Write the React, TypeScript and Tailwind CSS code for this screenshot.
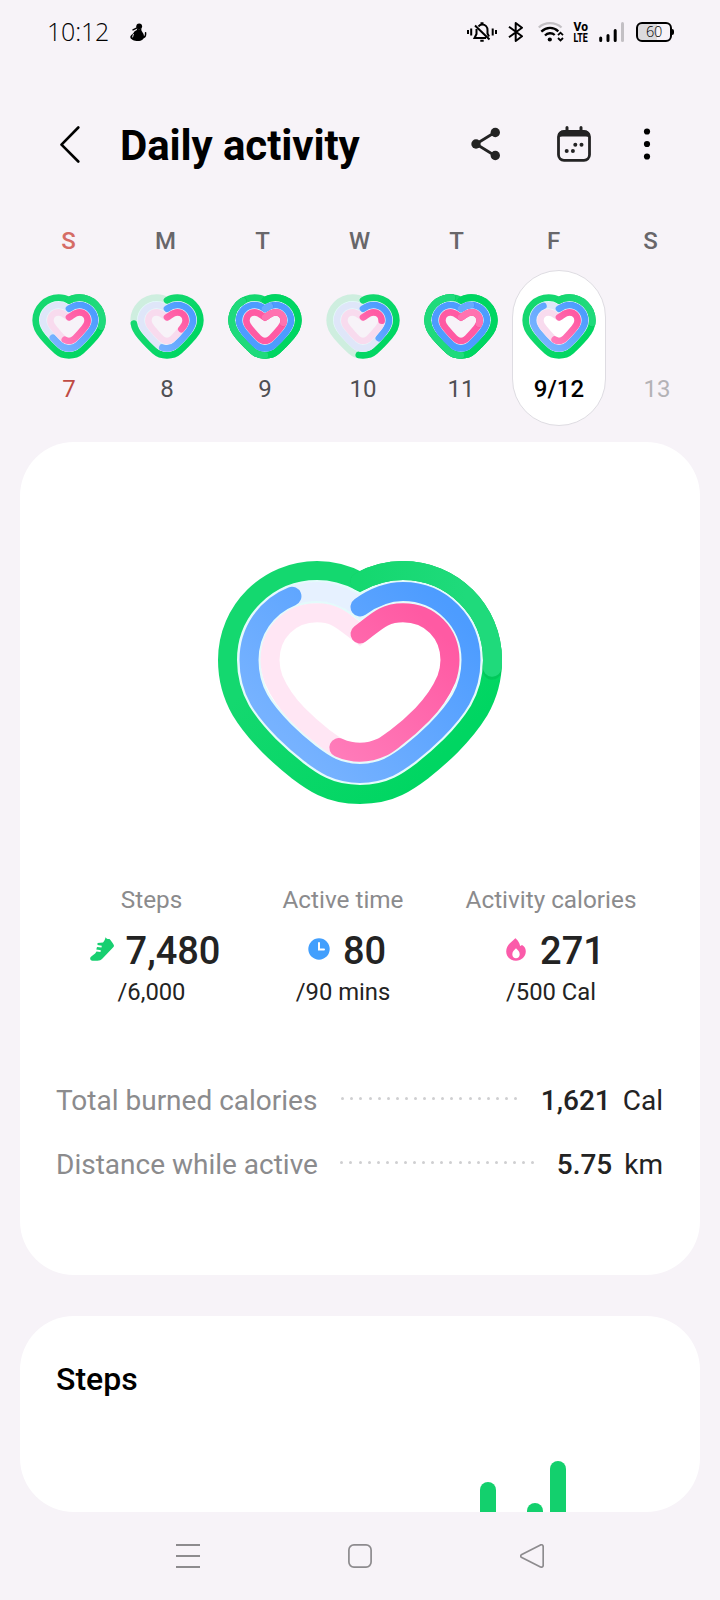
import { useId } from "react";

interface RingPaths {
  viewBox: string;
  stroke: number;
  rings: string[];
}

// Outer, middle and inner ring, each starts at the notch and runs clockwise
const LARGE: RingPaths = {
  viewBox: "18 21 284 243",
  stroke: 19,
  rings: [
    "M160 41.5C174 34 188 30.5 203 30.5C252 30.5 292.5 70 292.5 120C292.5 139 288 155 279.1 170.6C271 184 261.5 195 250.9 205.7C242 214.5 233 222.5 223.1 230.3C215.5 236 207.5 242 198.1 246.4C186 252.3 173 254.4 160 254.4C147 254.4 134 252.3 121.9 246.4C112.5 242 104.5 236 96.9 230.3C87 222.5 78 214.5 69.1 205.7C58.5 195 49 184 40.9 170.6C32 155 27.5 139 27.5 120C27.5 70 68 30.5 117 30.5C132 30.5 146 34 160 41.5Z",
    "M160 67C174 57 187 51.6 203 51.6C241 51.6 271 82 271 120C271 135 268 147 261 159.5C254.5 171 245.5 181 235.6 191C227.5 199 219 206.5 210.3 213.3C203.5 218.5 196.5 223.5 188.5 227.4C179.5 231.5 170 233.4 160 233.4C150 233.4 140.5 231.5 131.5 227.4C123.5 223.5 116.5 218.5 109.7 213.3C101 206.5 92.5 199 84.4 191C74.5 181 65.5 171 59 159.5C52 147 49 135 49 120C49 82 79 51.6 117 51.6C133 51.6 146 57 160 67Z",
    "M160 94C177 81 184 72.7 203 72.7C230 72.7 250 93 250 120C250 126 249 132 246.5 139C241 152 232 164.5 222.3 174.5C214 183 205.5 190.5 196.2 197.5C191.5 201 187.5 204.5 182.4 207C175 210.5 168 212.2 160 212.2C152 212.2 145 210.5 137.6 207C132.5 204.5 128.5 201 123.8 197.5C114.5 190.5 106 183 97.7 174.5C88 164.5 79 152 73.5 139C71 132 70 126 70 120C70 93 90 72.7 117 72.7C136 72.7 143 81 160 94Z",
  ],
};

const SMALL: RingPaths = {
  viewBox: "0 0 222 195",
  stroke: 20,
  rings: [
    "M111 19C121 13 131 11 142 11C180 11 211 42 211 79C211 100 203 113 190 128C177 143 162 159 148 171C138 180 126 184 111 184C96 184 84 180 74 171C60 159 45 143 32 128C19 113 11 100 11 79C11 42 42 11 80 11C91 11 101 13 111 19Z",
    "M111 44C121 37 131 33 142 33C168 33 189 54 189 79C189 95 182 105 172 117C162 129 151 141 140 151C132 159 122 163 111 163C100 163 90 159 82 151C71 141 60 129 50 117C40 105 33 95 33 79C33 54 54 33 80 33C91 33 101 37 111 44Z",
    "M111 70C124 62 130 55 142 55C157 55 167 66 167 80C167 89 162 96 156 103C148 113 139 123 130 132C124 138 118 141 111 141C104 141 98 138 92 132C83 123 74 113 66 103C60 96 55 89 55 80C55 66 65 55 80 55C92 55 98 62 111 70Z",
  ],
};

const COLORS = [
  { from: "#14d86f", to: "#00d662", lap: "#1fda7b", shade: "#00b84f", track: "rgba(20,215,110,0.18)" },
  { from: "#76b2ff", to: "#4d9cff", lap: "#66aaff", shade: "#3d86ea", track: "rgba(75,155,255,0.14)" },
  { from: "#ff7cba", to: "#ff5aa3", lap: "#ff72b0", shade: "#e04489", track: "rgba(255,85,180,0.15)" },
];

function HeartRings({ shape, values, className }: { shape: RingPaths; values: number[]; className: string }) {
  const id = useId();
  return (
    <svg viewBox={shape.viewBox} className={className} fill="none" strokeLinecap="round">
      <defs>
        {COLORS.map((c, i) => (
          <linearGradient key={i} id={`${id}-${i}`} x1="0" y1={i === 0 ? "0" : "0.8"} x2="1" y2={i === 0 ? "0.8" : "0"}>
            <stop offset={i === 0 ? "0.3" : "0.1"} stopColor={c.from} />
            <stop offset="0.9" stopColor={c.to} />
          </linearGradient>
        ))}
        <linearGradient id={`${id}-lap`} x1="0" y1="0" x2="1" y2="0">
          <stop offset="0.5" stopColor={COLORS[0].from} />
          <stop offset="0.9" stopColor={COLORS[0].lap} />
        </linearGradient>
        <clipPath id={`${id}-in`}>
          <path d={shape.rings[0]} />
        </clipPath>
      </defs>
      {shape.rings.slice(0, 2).map((d, i) => (
        <path key={i} d={d} stroke="#e4fbfb" strokeWidth={shape.stroke + 4.6} clipPath={i === 0 ? `url(#${id}-in)` : undefined} />
      ))}
      {shape.rings.map((d, i) => {
        const c = COLORS[i];
        const value = values[i];
        const extra = value - 1;
        const lapColor = i === 0 ? `url(#${id}-lap)` : c.lap;
        return (
          <g key={i} strokeWidth={shape.stroke}>
            {value < 1 && (
              <>
                <path d={d} stroke={shape === LARGE ? "#ffffff" : "#f7f3f8"} />
                <path d={d} stroke={c.track} />
              </>
            )}
            <path
              d={d}
              pathLength={1}
              stroke={value > 1 && i > 0 ? c.to : `url(#${id}-${i})`}
              strokeDasharray={value < 1 ? `${value} 2` : undefined}
            />
            {extra > 0 && (
              <>
                <path d={d} pathLength={1} stroke={c.shade} strokeOpacity={0.45} strokeDasharray={`${extra + 0.004} 2`} />
                <path d={d} pathLength={1} stroke={extra > 0.5 ? c.to : lapColor} strokeDasharray={`${extra} 2`} />
                {extra > 0.5 && (
                  <path
                    d={d}
                    pathLength={1}
                    stroke={c.lap}
                    strokeDasharray={`${extra - 0.5} 2`}
                    strokeDashoffset={-0.5}
                  />
                )}
              </>
            )}
          </g>
        );
      })}
    </svg>
  );
}

const weekdays = ["S", "M", "T", "W", "T", "F", "S"];

const days = [
  { label: "7", values: [1.27, 0.63, 0.54], color: "text-[#bf4b44]" },
  { label: "8", values: [0.745, 0.53, 0.32], color: "text-[#4f4f53]" },
  { label: "9", values: [1.88, 1.035, 1.25], color: "text-[#4f4f53]" },
  { label: "10", values: [0.52, 0.37, 0.23], color: "text-[#4f4f53]" },
  { label: "11", values: [1.95, 1.07, 1.26], color: "text-[#4f4f53]" },
  { label: "9/12", values: [1.25, 0.889, 0.542], color: "text-black", selected: true },
  { label: "13", values: null, color: "text-[#b4b2b6]" },
];

function StatusBar() {
  return (
    <div className="flex h-16 items-center pl-[47px] pr-[46px] text-black">
      <span className="-mt-0.5 w-[83px] font-['Open_Sans'] text-[25px] font-[350] leading-none tracking-[-0.2px]">10:12</span>
      <svg className="h-[18px] w-[17px]" viewBox="0 0 17 18">
        <circle cx="9.2" cy="3.3" r="2.9" />
        <path d="M7 4.800L3 6.800" stroke="#000" strokeWidth="1.500" strokeLinecap="round" />
        <path d="M7 5.500C8 6.500 10 6.500 11.500 5.500C10.500 8.500 14 9.500 14 13.200C14 16 12 18 7.800 18C4.500 18 0.300 16.500 0.300 14C0.300 12 3.500 11 4 9C5 7.500 7.500 7.800 7 5.500Z" />
        <path d="M3.400 11.300L2.600 14" stroke="#f7f3f8" strokeWidth="0.900" strokeLinecap="round" />
        <path d="M12.500 14.800C15.500 14.500 15.800 12 15.600 9.800" fill="none" stroke="#000" strokeWidth="1.500" strokeLinecap="round" />
      </svg>
      <div className="ml-auto flex items-center">
        <svg className="h-5 w-[30px]" viewBox="0 0 30 20" fill="none" stroke="#000" strokeWidth="2">
          <path d="M1 8V12M4.200 6.500V13.500M25.700 6.500V13.500M29 8V12" />
          <path d="M11.500 4.500C12.300 3 13.600 2.400 15 2.400C18.500 2.400 20.500 5 20.500 8V11.500L22 14.500M19 16H7.500L9.500 12V7" />
          <path d="M8 3.500L22.500 17.500" />
          <path d="M13.500 1.200H16.500M13.300 18.800H16.700" />
        </svg>
        <svg className="ml-[11px] h-5 w-[15px]" viewBox="0 0 15 20" fill="none" stroke="#000" strokeWidth="2" strokeLinejoin="round">
          <path d="M1 4.800L14 14.300L7.700 19V1L14 5.700L1 15.200" />
        </svg>
        <svg className="ml-[15px] h-5 w-[26px]" viewBox="0 0 26 20" fill="none">
          <path d="M0.800 5.500C7 -0.300 17 -0.300 23.500 5.500" stroke="#c3c0c4" strokeWidth="2.300" />
          <path d="M3.300 9.700C8.500 4.800 15.500 4.800 20.300 9.300M7 13.500C9.500 10.700 14 10.500 16.700 13" stroke="#000" strokeWidth="2.300" />
          <circle cx="11.800" cy="17.500" r="2.100" fill="#000" />
          <path d="M20 13.200L22.500 10.700L25 13.200M20 16L22.500 18.500L25 16" stroke="#000" strokeWidth="1.800" />
        </svg>
        <div className="ml-[8px] flex w-[17px] flex-col items-center text-[13px] font-extrabold leading-[11px]">
          <span className="scale-x-[0.92]">Vo</span>
          <span className="scale-x-[0.68]">LTE</span>
        </div>
        <svg className="ml-[10px] h-5 w-[26px]" viewBox="0 0 26 20" strokeWidth="3" strokeLinecap="round">
          <path d="M1.700 16V18.500M9 13.500V18.500M16.200 8.500V18.500" stroke="#000" />
          <path d="M23.500 1.500V18.500" stroke="#c3c0c4" />
        </svg>
        <div className="ml-[11px] flex items-center">
          <div className="flex h-5 w-9 items-center justify-center rounded-[6px] border-2 border-black bg-linear-to-r from-[#dcdadd] from-60% to-transparent to-60% font-['Open_Sans'] text-[14.500px] font-light leading-none tracking-[-0.3px]">
            60
          </div>
          <div className="h-1.5 w-0.5 rounded-r-sm bg-black" />
        </div>
      </div>
    </div>
  );
}

function Header() {
  return (
    <header className="flex h-[163px] items-center pl-[60px]">
      <svg className="-mt-0.5 h-[38px] w-5" viewBox="0 0 20 38" fill="none" stroke="#000" strokeWidth="2.600" strokeLinecap="round" strokeLinejoin="round">
        <path d="M18.300 1.500L1.500 18.700L18.300 35.500" />
      </svg>
      <h1 className="ml-10 w-[351px] text-[42px] font-bold leading-none tracking-[-0.1px] text-black">Daily activity</h1>
      <svg className="-mt-1 h-[34px] w-[30px]" viewBox="0 0 30 34" fill="#232323">
        <path d="M24.500 5L5 17L24.500 29" fill="none" stroke="#232323" strokeWidth="2.800" />
        <circle cx="24.300" cy="5.500" r="4.700" />
        <circle cx="5" cy="17" r="4.700" />
        <circle cx="24.300" cy="28.500" r="4.700" />
      </svg>
      <svg className="-mt-1 ml-14 h-9 w-[34px]" viewBox="0 0 34 36" fill="#232323">
        <path d="M10 1.500V6M24 1.500V6" stroke="#232323" strokeWidth="3" strokeLinecap="round" />
        <rect x="1.500" y="5.300" width="31" height="29" rx="5.500" fill="none" stroke="#232323" strokeWidth="2.800" />
        <path d="M1 12V10Q1 4.500 7 4.500H27Q33 4.500 33 10V12Q32 10.500 29 10.500H5Q2 10.500 1 12Z" />
        <circle cx="18.300" cy="18.700" r="2" />
        <circle cx="24.500" cy="18.700" r="2" />
        <circle cx="9.700" cy="25" r="2" />
        <circle cx="15.900" cy="25" r="2" />
      </svg>
      <svg className="-mt-1 ml-[52px] h-8 w-2" viewBox="0 0 8 32">
        <circle cx="4" cy="3.500" r="3.100" />
        <circle cx="4" cy="16" r="3.100" />
        <circle cx="4" cy="28.500" r="3.100" />
      </svg>
    </header>
  );
}

function WeekStrip() {
  return (
    <section>
      <div className="ml-5 grid h-7 w-[679px] grid-cols-7 items-center text-center text-2xl font-medium leading-none text-[#68666a]">
        {weekdays.map((d, i) => (
          <span key={i} className={i === 0 ? "text-[#d56c66]" : undefined}>
            {d}
          </span>
        ))}
      </div>
      <div className="ml-5 mt-[15px] grid h-[156px] w-[686px] grid-cols-7">
        {days.map((day) => (
          <div
            key={day.label}
            className={
              day.selected
                ? "mx-auto flex w-[94px] flex-col items-center rounded-full border border-[#dedce2] bg-white pt-[23px]"
                : "flex flex-col items-center pt-6"
            }
          >
            {day.values ? (
              <HeartRings shape={SMALL} values={day.values} className="h-[65px] w-[74px]" />
            ) : (
              <div className="h-[65px]" />
            )}
            <span className={`mt-4 flex h-7 items-center text-2xl leading-none ${day.color} ${day.selected ? "font-medium" : "font-normal"}`}>
              {day.label}
            </span>
          </div>
        ))}
      </div>
    </section>
  );
}

function ShoeIcon() {
  return (
    <svg className="mr-3 h-6 w-6" viewBox="0 0 24 24" fill="#17cf70">
      <path d="M15.500 0.300C16.500 2 18 2.200 19.500 2C21 3.500 22.500 5.500 23.800 8C24.200 9 23.800 9.700 23 10.500L12.500 21.500C11 23.200 9.500 23.700 7.500 23.700H2.500C0.300 23.700 -0.300 21.800 0.500 20.300C2 18.200 5 17.500 6.500 14.500L10.500 15L10.800 13.300L6.300 12.500L7 10L11.500 10.500L11.800 8.800L7.500 8V6L13 5.500C14.500 4 15.200 2.500 15.500 0.300Z" />
    </svg>
  );
}

function ClockIcon() {
  return (
    <svg className="mr-[13px] h-[22px] w-[22px]" viewBox="0 0 22 22">
      <circle cx="11" cy="11" r="10.700" fill="#429ffd" />
      <path d="M11 5V11.500H16" fill="none" stroke="#fff" strokeWidth="2" strokeLinecap="round" />
    </svg>
  );
}

function FlameIcon() {
  return (
    <svg className="mr-3.5 h-[23px] w-5" viewBox="0 0 20 23">
      <path
        d="M9.300 0.300C10.500 1 13.500 4 14 7.800C14.500 8.300 15.300 7.500 16 7C18 8 19.800 10 19.800 13.300C19.800 18.700 15.500 22.700 10 22.700C4.500 22.700 0.200 18.800 0.200 13.500C0.200 9 2.500 6.500 5 4.300C6.500 3 8 1.800 9.300 0.300Z"
        fill="#fb5baa"
      />
      <path d="M10 10.300C11.500 12 13.700 13.500 13.700 16.300C13.700 18.700 12 20.300 10 20.300C8 20.300 6.300 18.700 6.300 16.300C6.300 13.500 8.500 12 10 10.300Z" fill="#fff" />
    </svg>
  );
}

const metrics = [
  { label: "Steps", value: "7,480", goal: "/6,000", icon: <ShoeIcon />, width: "w-[171px]", shift: "pl-[7px]" },
  { label: "Active time", value: "80", goal: "/90 mins", icon: <ClockIcon />, width: "w-[212px]", shift: "pl-2" },
  { label: "Activity calories", value: "271", goal: "/500 Cal", icon: <FlameIcon />, width: "w-[204px]", shift: "pl-[9px]" },
];

const totals = [
  { label: "Total burned calories", value: "1,621", unit: "Cal", dots: 20 },
  { label: "Distance while active", value: "5.75", unit: "km", dots: 22 },
];

function SummaryCard() {
  return (
    <section className="mx-5 mt-4 flex h-[833px] flex-col rounded-[54px] bg-white pt-[119px]">
      <HeartRings shape={LARGE} values={[1.247, 0.889, 0.542]} className="h-[243px] w-[284px] self-center" />
      <div className="ml-[46px] mt-[82px] flex">
        {metrics.map((m) => (
          <div key={m.label} className={`flex flex-col items-center ${m.width}`}>
            <span className="flex h-7 items-center whitespace-nowrap text-[24.300px] leading-none text-[#8b8b8d]">{m.label}</span>
            <div className={`mt-[15px] flex h-11 items-center ${m.shift}`}>
              <div className="-mt-1">{m.icon}</div>
              <span className="text-[38px] font-medium leading-none text-[#232323]">{m.value}</span>
            </div>
            <span className="mt-1.5 flex h-7 items-center text-[23.800px] leading-none text-[#232323]">{m.goal}</span>
          </div>
        ))}
      </div>
      <div className="mt-[78px] flex flex-col gap-8 pl-9 pr-[37px]">
        {totals.map((t) => (
          <div key={t.label} className="flex h-8 items-center text-[28px] leading-none text-[#232323]">
            <span className="whitespace-nowrap text-[#8b8b8d]">{t.label}</span>
            <div className="mx-auto -mt-1.5 flex gap-[6.100px]">
              {Array.from({ length: t.dots }, (_, i) => (
                <i key={i} className="h-[3px] w-[3px] rounded-full bg-[#cfcfd1]" />
              ))}
            </div>
            <span className="font-medium">{t.value}</span>
            <span className="ml-3">{t.unit}</span>
          </div>
        ))}
      </div>
    </section>
  );
}

function StepsCard() {
  return (
    <section className="mx-5 mt-[41px] flex h-[196px] flex-col overflow-hidden rounded-[54px] bg-white pt-[45px]">
      <h2 className="pl-9 text-[32px] font-medium leading-9 text-black">Steps</h2>
      <div className="mt-auto flex items-end pl-[460px]">
        <div className="h-[30px] w-4 rounded-t-full bg-[#13d06d]" />
        <div className="ml-[31px] h-[9px] w-4 rounded-t-full bg-[#13d06d]" />
        <div className="ml-[7px] h-[51px] w-4 rounded-t-full bg-[#13d06d]" />
      </div>
    </section>
  );
}

function NavBar() {
  return (
    <nav className="mt-auto flex h-[88px] items-center justify-center gap-[148px]">
      <svg className="h-6 w-6" viewBox="0 0 24 24" stroke="#8d8b8e" strokeWidth="2">
        <path d="M0 1H24M0 12H24M0 23H24" />
      </svg>
      <svg className="h-6 w-6" viewBox="0 0 24 24" fill="none" stroke="#8d8b8e" strokeWidth="1.700">
        <rect x="0.900" y="0.900" width="22.200" height="22.200" rx="5" />
      </svg>
      <svg className="h-6 w-6" viewBox="0 0 24 24" fill="none" stroke="#8d8b8e" strokeWidth="1.700" strokeLinejoin="round">
        <path d="M1.300 10.800L20.500 0.900Q23.200 0.200 23.200 3V21Q23.200 23.800 20.500 23L1.300 13.200Q0 12 1.300 10.800Z" />
      </svg>
    </nav>
  );
}

function App() {
  return (
    <div className="flex h-[1600px] w-[720px] flex-col overflow-hidden bg-[#f7f3f8] font-[Roboto,sans-serif]">
      <StatusBar />
      <Header />
      <WeekStrip />
      <SummaryCard />
      <StepsCard />
      <NavBar />
    </div>
  );
}

export default App;
